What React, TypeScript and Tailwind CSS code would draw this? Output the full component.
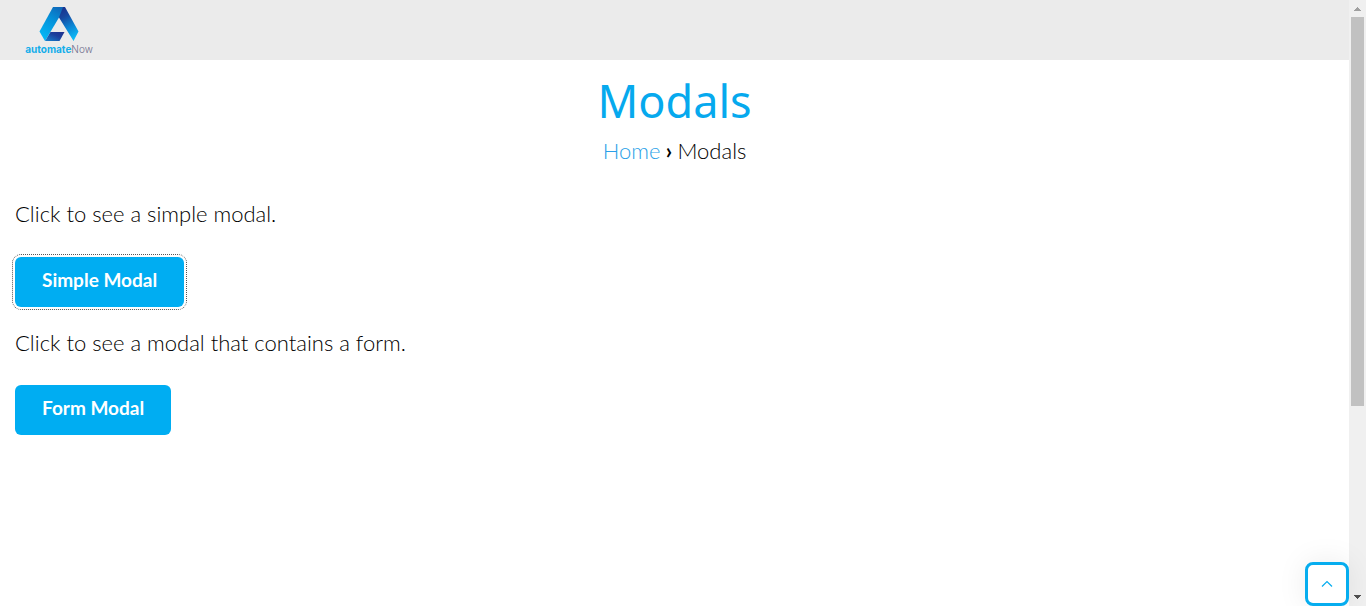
import type { ReactNode } from "react";

function Logo() {
  return (
    <a href="#home" aria-label="automateNow" className="flex w-[70px] flex-col items-center">
      <svg viewBox="0 0 40 34" className="h-[34px] w-10" aria-hidden="true">
        <defs>
          <linearGradient id="left" gradientUnits="userSpaceOnUse" x1="22" y1="2" x2="4" y2="30">
            <stop offset="0" stopColor="#0f6abb" />
            <stop offset="0.4" stopColor="#0590d8" />
            <stop offset="1" stopColor="#03b6f5" />
          </linearGradient>
          <linearGradient id="right" gradientUnits="userSpaceOnUse" x1="21" y1="3" x2="37" y2="31">
            <stop offset="0" stopColor="#1a3590" />
            <stop offset="0.25" stopColor="#17489f" />
            <stop offset="0.6" stopColor="#0b84d3" />
            <stop offset="1" stopColor="#0cbcf8" />
          </linearGradient>
          <linearGradient id="base" x1="0" y1="1" x2="1" y2="0">
            <stop offset="0" stopColor="#1583cf" />
            <stop offset="0.6" stopColor="#1c3f9c" />
            <stop offset="1" stopColor="#20308c" />
          </linearGradient>
        </defs>
        <path d="M14 0H26L39.5 24.5L34.5 34L20 10.5L17 5Z" fill="url(#right)" />
        <path d="M14 0H24L20 10.5L6 34L0.5 24.5Z" fill="url(#left)" />
        <path d="M11.5 25H25.5L20.5 34H6Z" fill="url(#base)" />
      </svg>
      <span className="whitespace-nowrap pt-0.5 font-[Inter,sans-serif] text-[10px] leading-3 font-light text-[#6f6d8c]">
        <b className="font-bold text-[#14aeea]">automate</b>Now
      </span>
    </a>
  );
}

function ModalButton({ children, autoFocus }: { children: ReactNode; autoFocus?: boolean }) {
  return (
    <button
      type="button"
      autoFocus={autoFocus}
      className="h-[50px] rounded-md bg-[#00adf2] px-[27px] pb-1 text-[19px] font-bold text-white outline-offset-2 outline-[#555] focus:outline-1 focus:outline-dotted"
    >
      {children}
    </button>
  );
}

function ScrollTrack() {
  return (
    <div aria-hidden="true" className="flex w-[17px] shrink-0 flex-col items-center bg-[#f0f0f0]">
      <svg viewBox="0 0 17 17" className="size-[17px] shrink-0">
        <path d="M5 11h7v-1h-1v-1h-1v-1h-1v-1h-1v1h-1v1h-1v1h-1z" fill="#a0a0a0" />
      </svg>
      <div className="flex w-full grow flex-col px-0.5">
        <div className="h-[68%] bg-[#c1c1c1]" />
      </div>
      <svg viewBox="0 0 17 17" className="size-[17px] shrink-0">
        <path d="M5 6h7v1h-1v1h-1v1h-1v1h-1v-1h-1v-1h-1v-1h-1z" fill="#505050" />
      </svg>
    </div>
  );
}

export default function App() {
  return (
    <div className="flex h-screen bg-white font-[Lato,sans-serif] text-black">
      <div className="relative flex min-w-0 grow flex-col">
        <header className="flex h-[60px] shrink-0 items-start bg-[#ebebeb] px-6 pt-[7px]">
          <Logo />
        </header>
        <div className="flex flex-col items-center pt-[11px]">
          <h1 className="font-['Noto_Sans',sans-serif] text-[45px] leading-[60px] text-[#06a9ee]">Modals</h1>
          <nav aria-label="Breadcrumb" className="pt-[5px] text-[22px] leading-[30px] font-light">
            <a href="#home" className="text-[#2a9fe8]">Home</a>
            <span className="font-bold"> › </span>
            <span>Modals</span>
          </nav>
        </div>
        <main className="flex flex-col items-start px-[15px] pt-8 text-[22px] leading-[32px] font-light">
          <p className="pb-[27px]">Click to see a simple modal.</p>
          <ModalButton autoFocus>Simple Modal</ModalButton>
          <p className="pt-5 pb-[26px]">Click to see a modal that contains a form.</p>
          <ModalButton>Form Modal</ModalButton>
        </main>
        <button
          type="button"
          aria-label="Back to top"
          className="absolute right-0 bottom-0 flex size-11 items-center justify-center rounded-lg border-3 border-[#06adef] bg-white text-[#06adef] shadow-[0_0_30px_rgba(0,0,0,0.08)]"
        >
          <svg viewBox="0 0 12 8" className="h-2 w-3" fill="none" stroke="currentColor" strokeWidth="1.2" aria-hidden="true">
            <path d="M1 6.5L6 1.5L11 6.5" />
          </svg>
        </button>
      </div>
      <ScrollTrack />
    </div>
  );
}
